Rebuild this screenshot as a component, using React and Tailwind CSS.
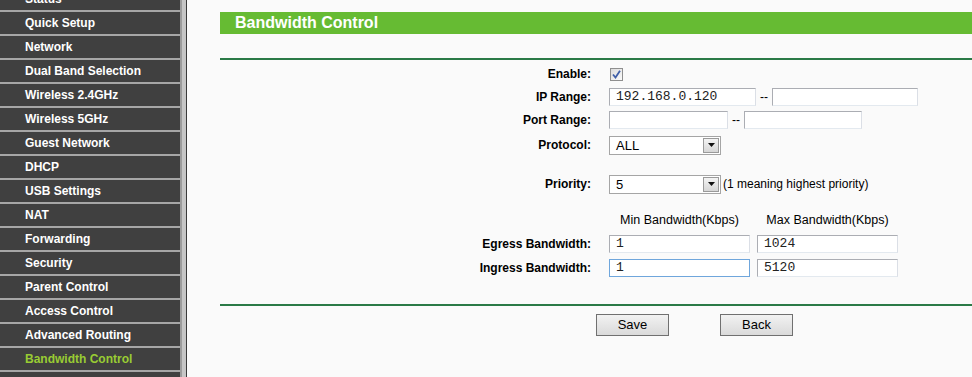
import React from "react";

const menu = [
  "Status",
  "Quick Setup",
  "Network",
  "Dual Band Selection",
  "Wireless 2.4GHz",
  "Wireless 5GHz",
  "Guest Network",
  "DHCP",
  "USB Settings",
  "NAT",
  "Forwarding",
  "Security",
  "Parent Control",
  "Access Control",
  "Advanced Routing",
  "Bandwidth Control",
  "",
];

const Label = ({ children }) => (
  <div className="w-[371px] shrink-0 text-right font-bold text-[12px] text-black">
    {children}
  </div>
);

const TextBox = ({ value = "", w, focus }) => (
  <input
    readOnly
    value={value}
    className={`h-[18px] ${w} px-[6px] bg-white text-[13px] text-[#222] outline-none border ${
      focus
        ? "border-[#6fa6dc]"
        : "border-[#abadb3] border-r-[#dbdfe6] border-b-[#e3e9ef]"
    }`}
    style={{ fontFamily: '"Liberation Mono", "Courier New", monospace' }}
  />
);

const Select = ({ value }) => (
  <div className="h-[19px] w-[112px] flex border border-[#a5a5a5] bg-white">
    <div className="flex-1 pl-[6px] text-[13px] leading-[17px] text-black">{value}</div>
    <div className="w-[16px] h-[15px] m-[1px] border border-[#9a9a9a] bg-gradient-to-b from-[#f4f4f4] to-[#d6d6d6] flex items-center justify-center">
      <svg width="7" height="4" viewBox="0 0 7 4">
        <path d="M0 0h7L3.5 4z" fill="#111" />
      </svg>
    </div>
  </div>
);

const Dash = () => <span className="mx-[4px] text-[12px] text-black">--</span>;

const Button = ({ children }) => (
  <button className="w-[73px] h-[22px] border border-[#707070] bg-gradient-to-b from-[#f2f2f2] to-[#dadada] text-[13px] text-black">
    {children}
  </button>
);

export default function App() {
  return (
    <div
      className="h-[377px] w-[972px] overflow-hidden flex bg-[#fafafa]"
      style={{ fontFamily: '"Liberation Sans", Arial, sans-serif' }}
    >
      <div className="w-[180px] shrink-0 bg-[#404040] overflow-hidden">
        <div className="-mt-[12px]">
          {menu.map((m, i) => (
            <div
              key={i}
              className={`h-[24px] border-b-2 border-[#a6a6a6] pl-[25px] flex items-center text-[12px] font-bold ${
                m === "Bandwidth Control" ? "text-[#99cc33]" : "text-white"
              }`}
            >
              {m}
            </div>
          ))}
        </div>
      </div>
      <div className="w-[2px] shrink-0 bg-[#9c9c9c]" />
      <div className="w-[4px] shrink-0 bg-[#c6c6c6]" />
      <div className="w-[1px] shrink-0 bg-[#3a3a3a]" />

      <div className="flex-1 pl-[33px]">
        <div className="mt-[12px] h-[22px] bg-[#66bb33] pl-[15px] flex items-center text-white font-bold text-[16px]">
          Bandwidth Control
        </div>
        <div className="mt-[24px] h-[2px] bg-[#2a7a46]" />

        <div className="pt-[2px]">
          <div className="h-[24px] flex items-center">
            <Label>Enable:</Label>
            <div className="ml-[19px] w-[13px] h-[13px] border border-[#8f8f8f] bg-gradient-to-br from-[#dcdcdc] to-[#fbfbfb] flex items-center justify-center">
              <svg width="9" height="9" viewBox="0 0 9 9">
                <path d="M1 4.5l2.5 3L8 0.8" stroke="#3f5fa8" strokeWidth="1.8" fill="none" />
              </svg>
            </div>
          </div>
          <div className="h-[22px] flex items-center">
            <Label>IP Range:</Label>
            <div className="ml-[18px] flex items-center">
              <TextBox value="192.168.0.120" w="w-[147px]" />
              <Dash />
              <TextBox w="w-[146px]" />
            </div>
          </div>
          <div className="h-[24px] flex items-center">
            <Label>Port Range:</Label>
            <div className="ml-[18px] flex items-center">
              <TextBox w="w-[119px]" />
              <Dash />
              <TextBox w="w-[118px]" />
            </div>
          </div>
          <div className="h-[26px] flex items-center">
            <Label>Protocol:</Label>
            <div className="ml-[18px]">
              <Select value="ALL" />
            </div>
          </div>
          <div className="h-[14px]" />
          <div className="h-[24px] flex items-center">
            <Label>Priority:</Label>
            <div className="ml-[18px] flex items-center">
              <Select value="5" />
              <span className="ml-[2px] text-[12px] text-black">(1 meaning highest priority)</span>
            </div>
          </div>
          <div className="h-[12px]" />
          <div className="h-[24px] flex items-center">
            <div className="w-[371px] shrink-0" />
            <div className="ml-[18px] w-[141px] text-center text-[12.5px] text-black">Min Bandwidth(Kbps)</div>
            <div className="ml-[7px] w-[141px] text-center text-[12.5px] text-black">Max Bandwidth(Kbps)</div>
          </div>
          <div className="h-[24px] flex items-center">
            <Label>Egress Bandwidth:</Label>
            <div className="ml-[18px] flex items-center gap-[7px]">
              <TextBox value="1" w="w-[141px]" />
              <TextBox value="1024" w="w-[141px]" />
            </div>
          </div>
          <div className="h-[24px] flex items-center">
            <Label>Ingress Bandwidth:</Label>
            <div className="ml-[18px] flex items-center gap-[7px]">
              <TextBox value="1" w="w-[141px]" focus />
              <TextBox value="5120" w="w-[141px]" />
            </div>
          </div>
        </div>

        <div className="mt-[24px] h-[2px] bg-[#2a7a46]" />
        <div className="mt-[8px] flex gap-[51px] pl-[376px]">
          <Button>Save</Button>
          <Button>Back</Button>
        </div>
      </div>
    </div>
  );
}
